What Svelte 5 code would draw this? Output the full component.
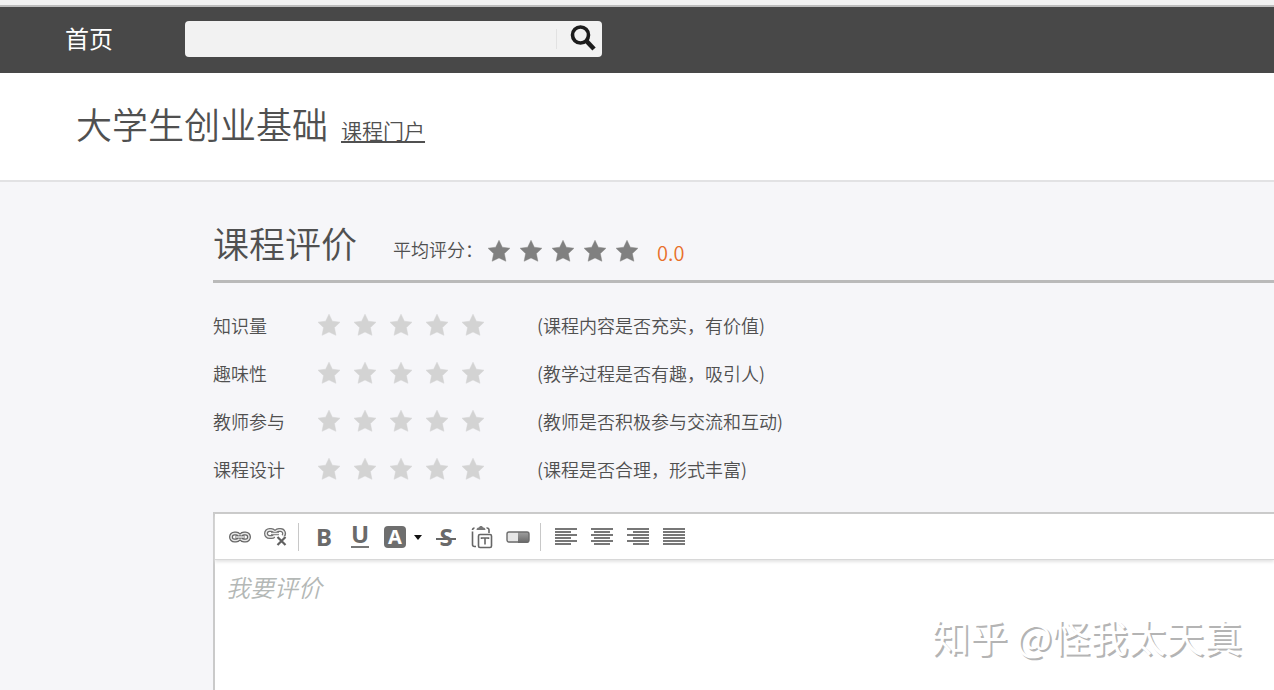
<script lang="ts">
	const criteria = [
		{ id: 'knowledge', name: '知识量', hint: '(课程内容是否充实，有价值)' },
		{ id: 'interest', name: '趣味性', hint: '(教学过程是否有趣，吸引人)' },
		{ id: 'teacher', name: '教师参与', hint: '(教师是否积极参与交流和互动)' },
		{ id: 'design', name: '课程设计', hint: '(课程是否合理，形式丰富)' }
	];
	const stars = [1, 2, 3, 4, 5];

	// Short lines of each alignment icon: [x1, x2]
	const aligns = [
		{ label: '左对齐', short: [0, 16] },
		{ label: '居中对齐', short: [3, 19] },
		{ label: '右对齐', short: [6, 22] },
		{ label: '两端对齐', short: [0, 22] }
	];

	let scores: Record<string, number> = $state({ knowledge: 0, interest: 0, teacher: 0, design: 0 });
	let keyword = $state('');
	let comment = $state('');
</script>

{#snippet star()}
	<svg class="star" viewBox="0 0 24 24" aria-hidden="true">
		<path d="M12 1.2 15.3 8.2 23 9.2 17.4 14.6 18.9 22.3 12 18.9 5.1 22.3 6.6 14.6 1 9.2 8.7 8.2Z" />
	</svg>
{/snippet}

<div class="page">
	<nav class="topbar">
		<a class="home" href="#home">首页</a>
		<form class="search" onsubmit={(e) => e.preventDefault()}>
			<input type="text" aria-label="搜索" bind:value={keyword} />
			<button type="submit" aria-label="搜索">
				<svg width="28" height="28" viewBox="0 0 28 28" fill="none" stroke="#1c1c1c">
					<circle cx="10.5" cy="10" r="8" stroke-width="3.6" />
					<path d="M16 15.5 24 24" stroke-width="4.6" />
				</svg>
			</button>
		</form>
	</nav>

	<header class="course">
		<h1>大学生创业基础</h1>
		<a href="#portal">课程门户</a>
	</header>

	<main>
		<div class="heading">
			<h2>课程评价</h2>
			<span class="average-label">平均评分：</span>
			<span class="average">
				{#each stars as n (n)}
					{@render star()}
				{/each}
			</span>
			<span class="score">0.0</span>
		</div>

		<div class="criteria">
			{#each criteria as item (item.id)}
				<div class="criterion" role="radiogroup" aria-labelledby={item.id}>
					<span id={item.id}>{item.name}</span>
					<div class="rating">
						{#each stars as n (n)}
							<label class:on={n <= scores[item.id]}>
								<input
									type="radio"
									name={item.id}
									value={n}
									aria-label="{n}分"
									bind:group={scores[item.id]}
								/>
								{@render star()}
							</label>
						{/each}
					</div>
					<span>{item.hint}</span>
				</div>
			{/each}
		</div>

		<div class="editor">
			<div class="toolbar" role="toolbar" aria-label="格式">
				<button type="button" aria-label="链接">
					<svg width="22" height="12" viewBox="0 0 22 12" fill="none">
						<g stroke="#666" stroke-width="4">
							<path d="M10 8A4 4 0 0 1 7 9.5H5.5a3.5 3.5 0 0 1 0-7H7A4 4 0 0 1 10 4" />
							<path d="M12 4A4 4 0 0 1 15 2.5h1.5a3.5 3.5 0 0 1 0 7H15A4 4 0 0 1 12 8" />
							<path d="M6.5 6h9" stroke-width="3.6" />
						</g>
						<g stroke="#e8e8e8" stroke-width="1.5">
							<path d="M10 8A4 4 0 0 1 7 9.5H5.5a3.5 3.5 0 0 1 0-7H7A4 4 0 0 1 10 4" />
							<path d="M12 4A4 4 0 0 1 15 2.5h1.5a3.5 3.5 0 0 1 0 7H15A4 4 0 0 1 12 8" />
							<path d="M7 6h8" />
						</g>
					</svg>
				</button>
				<button type="button" aria-label="取消链接">
					<svg width="24" height="18" viewBox="0 0 24 18" fill="none">
						<g stroke="#707070" stroke-width="4">
							<path d="M10 8.2A4 4 0 0 1 7 9H5.5a3.5 3.5 0 0 1 0-7H7a4 4 0 0 1 3 1.3" />
							<path d="M12 3.3A4 4 0 0 1 15 2h1.5a3.5 3.5 0 0 1 2.5 6" />
							<path d="M7 5.5h8" stroke-width="3.4" />
						</g>
						<g stroke="#eee" stroke-width="1.5">
							<path d="M10 8.2A4 4 0 0 1 7 9H5.5a3.5 3.5 0 0 1 0-7H7a4 4 0 0 1 3 1.3" />
							<path d="M12 3.3A4 4 0 0 1 15 2h1.5a3.5 3.5 0 0 1 2.5 6" />
							<path d="M7 5.5h8" />
						</g>
						<path d="m13.5 9 8 8m0-8-8 8" stroke="#fff" stroke-width="3.6" />
						<path d="m13.5 9 8 8m0-8-8 8" stroke="#606060" stroke-width="2.2" />
					</svg>
				</button>
				<span class="divider"></span>
				<button type="button" class="letter" aria-label="加粗">B</button>
				<button type="button" class="letter underline" aria-label="下划线"><span>U</span></button>
				<button type="button" class="color" aria-label="文字颜色">
					<span class="swatch">A</span>
					<svg width="8" height="5" viewBox="0 0 8 5"><path d="M0 0h8L4 5Z" fill="#111" /></svg>
				</button>
				<button type="button" class="letter strike" aria-label="删除线"><span>S</span></button>
				<button type="button" aria-label="粘贴为文本">
					<svg width="22" height="24" viewBox="0 0 22 24" fill="none" stroke="#666" stroke-width="1.6">
						<path d="M5 21.5H3.5a2 2 0 0 1-2-2V6.5M1.5 5a2 2 0 0 1 2-2M15.5 3A2 2 0 0 1 18 5v3" />
						<path d="M5.5 5C5.500 3 7 2.5 8 2.5c.4-2 3.600-2 4 0 1 0 2.500.5 2.500 2.500Z" fill="#777" stroke="none" />
						<rect x="7.5" y="9.5" width="13" height="13" rx="1.5" />
						<path d="M10.5 14v-1h7v1M14 13v6.500" />
					</svg>
				</button>
				<button type="button" aria-label="清除格式">
					<svg width="24" height="14" viewBox="0 0 24 14">
						<defs>
							<linearGradient id="rubber" x1="0" y1="0" x2="0" y2="1">
								<stop offset="0" stop-color="#a0a0a0" />
								<stop offset="1" stop-color="#666" />
							</linearGradient>
						</defs>
						<rect x="1" y="2" width="22" height="11" rx="2" fill="#e6e6e6" />
						<path d="M12 2h9a2 2 0 0 1 2 2v7a2 2 0 0 1-2 2h-9Z" fill="url(#rubber)" />
						<rect x="1" y="2" width="22" height="10" rx="2" fill="none" stroke="#6c6c6c" stroke-width="1.4" />
					</svg>
				</button>
				<span class="divider"></span>
				{#each aligns as align (align.label)}
					<button type="button" aria-label={align.label}>
						<svg width="22" height="18" viewBox="0 0 22 18" stroke="#555" stroke-width="1.6">
							{#each [1, 4, 7, 10, 13, 16] as y, i (y)}
								<line
									x1={i % 2 ? align.short[0] : 0}
									x2={i % 2 ? align.short[1] : 22}
									y1={y}
									y2={y}
								/>
							{/each}
						</svg>
					</button>
				{/each}
			</div>
			<textarea aria-label="我要评价" placeholder="我要评价" bind:value={comment}></textarea>
		</div>
	</main>

	<div class="watermark">知乎 @怪我太天真</div>
</div>

<style>
	:global(body) {
		margin: 0;
		background: #f6f6f9;
	}

	.page {
		position: relative;
		display: flex;
		flex-direction: column;
		box-sizing: border-box;
		min-height: 100vh;
		border-top: 5px solid #f2f2f2;
		overflow: hidden;
		font-family: 'Noto Sans CJK SC', sans-serif;
		font-weight: 350;
		font-size: 18px;
		line-height: 24px;
		color: #505050;
	}

	button {
		padding: 0;
		border: 0;
		background: none;
		cursor: pointer;
	}

	.topbar {
		display: flex;
		align-items: center;
		gap: 72px;
		box-sizing: border-box;
		height: 68px;
		padding: 0 0 2px 65px;
		border-top: 2px solid #bdbdbd;
		background: #484848;
	}

	.home {
		padding-bottom: 2px;
		font-size: 24px;
		font-weight: 400;
		color: #fff;
		text-decoration: none;
	}

	.search {
		display: flex;
		align-items: center;
		width: 417px;
		height: 36px;
		border-radius: 4px;
		background: #f2f2f2;
	}

	.search input {
		flex: 1;
		min-width: 0;
		padding: 0 12px;
		border: 0;
		outline: 0;
		background: none;
		font: inherit;
	}

	.search button {
		display: flex;
		align-items: center;
		justify-content: center;
		width: 46px;
		height: 20px;
		padding-left: 8px;
		border-left: 1px solid #e2e2e2;
	}

	.course {
		display: flex;
		align-items: baseline;
		gap: 13px;
		padding: 26px 76px 33px;
		border-bottom: 2px solid #e2e2e4;
		background: #fff;
	}

	h1,
	h2 {
		margin: 0;
		font-size: 36px;
		font-weight: 350;
		line-height: 48px;
	}

	.course a {
		font-size: 21px;
		color: inherit;
		text-underline-offset: 2px;
	}

	main {
		display: flex;
		flex: 1;
		flex-direction: column;
		padding: 36px 0 0 213px;
	}

	.heading {
		display: flex;
		align-items: center;
		padding-bottom: 14px;
		border-bottom: 3px solid #bababa;
	}

	.average-label {
		margin: 14px 4px 0 36px;
	}

	.average {
		display: flex;
		gap: 8px;
		margin-top: 18px;
	}

	.star {
		display: block;
		width: 24px;
		height: 24px;
		fill: #d3d3d3;
		stroke: #e4e4e6;
		stroke-width: 1px;
		paint-order: stroke;
	}

	.average .star {
		fill: #808080;
		stroke: #c4c4c4;
	}

	.score {
		margin: 22px 0 0 18px;
		font-size: 20px;
		color: #e8702a;
	}

	.criteria {
		padding: 18px 0 19px;
	}

	.criterion {
		display: grid;
		grid-template-columns: 104px 220px 1fr;
		align-items: center;
		height: 48px;
	}

	.rating {
		display: flex;
		gap: 12px;
	}

	.rating label {
		position: relative;
		cursor: pointer;
	}

	.rating input {
		position: absolute;
		inset: 0;
		margin: 0;
		opacity: 0;
	}

	.on .star {
		fill: #f09a3e;
	}

	.editor {
		display: flex;
		flex: 1;
		flex-direction: column;
		min-height: 160px;
		border: solid #cacaca;
		border-width: 2px 0 0 2px;
		background: #fff;
	}

	.toolbar {
		display: flex;
		align-items: center;
		height: 44px;
		padding: 1px 7px 0;
		border-bottom: 1px solid #d8d8d8;
		box-shadow: 0 2px 3px #e4e4e4;
	}

	.toolbar button {
		display: flex;
		align-items: center;
		justify-content: center;
		width: 36px;
		height: 36px;
	}

	.divider {
		width: 1px;
		height: 28px;
		margin: 0 7px 0 4px;
		background: #c8c8c8;
	}

	.toolbar .letter {
		font: bold 24px/24px 'Noto Sans', sans-serif;
		color: #6a6a6a;
	}

	.underline span {
		width: 18px;
		height: 20px;
		border-bottom: 2px solid #777;
		line-height: 16px;
	}

	.strike span {
		width: 20px;
		background: linear-gradient(#666, #666) 0 13px / 20px 2px no-repeat;
	}

	.toolbar .color {
		gap: 8px;
		width: 50px;
	}

	.swatch {
		width: 22px;
		height: 22px;
		border-radius: 4px;
		background: #6e6e6e;
		font: bold 20px/22px 'Noto Sans', sans-serif;
		text-align: center;
		color: #fff;
	}

	textarea {
		flex: 1;
		padding: 11px;
		border: 0;
		outline: 0;
		resize: none;
		background: none;
		font: inherit;
		font-size: 24px;
		line-height: 32px;
		color: inherit;
	}

	textarea::placeholder {
		font-style: italic;
		color: #b4b8b6;
	}

	.watermark {
		position: absolute;
		right: 32px;
		bottom: 30px;
		font-size: 38px;
		font-weight: 400;
		line-height: 48px;
		color: #fff;
		text-shadow: 2px 2px 0 #b4b4b4;
		pointer-events: none;
	}
</style>
